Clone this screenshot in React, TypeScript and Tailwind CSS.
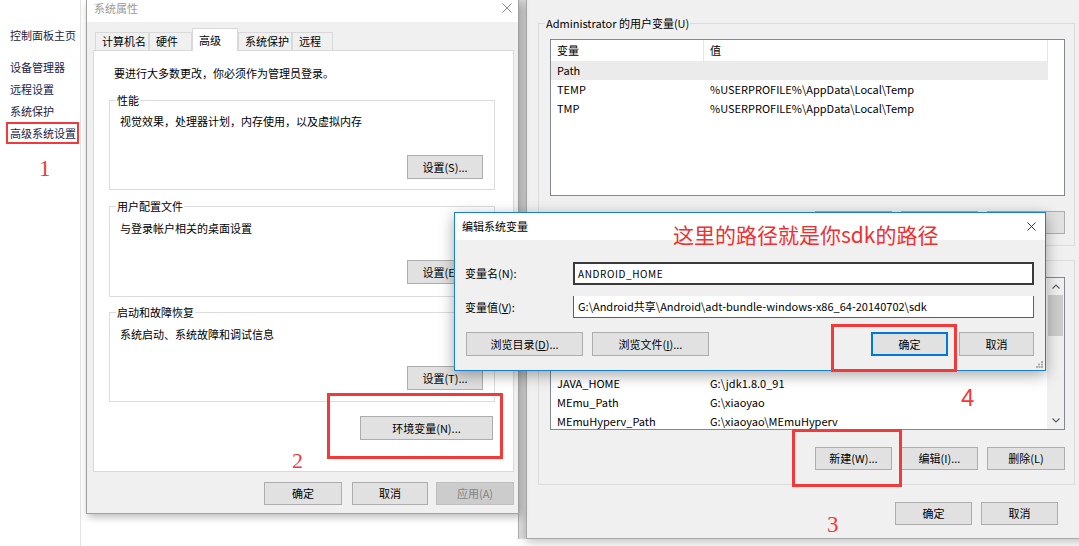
import type { ReactNode } from "react";

const userVars = [
  { name: "Path", value: "", selected: true },
  { name: "TEMP", value: "%USERPROFILE%\\AppData\\Local\\Temp" },
  { name: "TMP", value: "%USERPROFILE%\\AppData\\Local\\Temp" },
];

const sysVars = [
  { name: "ComSpec", value: "C:\\Windows\\system32\\cmd.exe" },
  { name: "ANDROID_HOME", value: "G:\\Android共享\\Android\\adt-bundle" },
  { name: "CLASSPATH", value: ".;%JAVA_HOME%\\lib" },
  { name: "FP_NO_HOST_CHECK", value: "NO" },
  { name: "JAVA_HOME", value: "G:\\jdk1.8.0_91" },
  { name: "MEmu_Path", value: "G:\\xiaoyao" },
  { name: "MEmuHyperv_Path", value: "G:\\xiaoyao\\MEmuHyperv" },
];

function Btn({
  children,
  className = "",
  disabled,
  focused,
}: {
  children: ReactNode;
  className?: string;
  disabled?: boolean;
  focused?: boolean;
}) {
  const look = disabled
    ? "border border-[#bfbfbf] bg-[#cccccc] text-[#838383]"
    : focused
      ? "border-2 border-[#0078d7] bg-[#e1e1e1] text-black"
      : "border border-[#adadad] bg-[#e1e1e1] text-black";
  return (
    <div
      className={`flex shrink-0 items-center justify-center whitespace-nowrap text-[11px] leading-none ${look} ${className}`}
    >
      {children}
    </div>
  );
}

function Close({ className = "" }: { className?: string }) {
  return (
    <svg viewBox="0 0 10 10" className={className} fill="none" stroke="currentColor" strokeWidth="1">
      <path d="M0.5 0.5 9.5 9.5M9.5 0.5 0.5 9.5" />
    </svg>
  );
}

function Group({
  label,
  className = "",
  labelBg = "bg-white",
  children,
}: {
  label: string;
  className?: string;
  labelBg?: string;
  children?: ReactNode;
}) {
  return (
    <div className={`relative flex shrink-0 flex-col border border-[#dcdcdc] ${className}`}>
      <span
        className={`absolute -top-[9px] left-[6px] whitespace-nowrap px-[1px] text-[11px] leading-[16px] ${labelBg}`}
      >
        {label}
      </span>
      {children}
    </div>
  );
}

function Tab({ label, w, active }: { label: string; w: string; active?: boolean }) {
  return (
    <div
      className={`relative z-10 flex shrink-0 items-center whitespace-nowrap border border-b-0 border-[#d9d9d9] pl-[6px] text-[11px] ${w} ${
        active ? "-mb-[1px] h-[23px] bg-white" : "h-[18px] bg-[#f0f0f0]"
      }`}
    >
      {label}
    </div>
  );
}

function VarList({
  rows,
  headerH,
  className = "",
  scroll,
}: {
  rows: { name: string; value: string; selected?: boolean }[];
  headerH: string;
  className?: string;
  scroll?: boolean;
}) {
  return (
    <div
      className={`relative shrink-0 overflow-hidden border border-[#828790] bg-white text-[11px] ${className}`}
    >
      <div className={`flex w-[497px] ${headerH}`}>
        <div className="flex w-[153px] items-center border-r border-[#e5e5e5] pl-[6px]">变量</div>
        <div className="flex flex-1 items-center border-r border-[#e5e5e5] pl-[6px]">值</div>
      </div>
      {rows.map((r) => (
        <div
          key={r.name}
          className={`flex h-[19px] w-[497px] items-center whitespace-nowrap ${r.selected ? "bg-[#ebebeb]" : ""}`}
        >
          <span className="w-[153px] pl-[6px]">{r.name}</span>
          <span className="pl-[6px]">{r.value}</span>
        </div>
      ))}
      {scroll && (
        <div className="absolute bottom-0 right-0 top-0 flex w-[17px] flex-col bg-[#f0f0f0]">
          <div className="flex h-[17px] items-center justify-center">
            <svg viewBox="0 0 8 5" className="h-[5px] w-[8px]" fill="none" stroke="#606060" strokeWidth="1.2">
              <path d="M0.5 4.5 4 1 7.5 4.5" />
            </svg>
          </div>
          <div className="mx-[1px] h-[41px] bg-[#cdcdcd]" />
          <div className="mt-auto flex h-[17px] items-center justify-center">
            <svg viewBox="0 0 8 5" className="h-[5px] w-[8px]" fill="none" stroke="#606060" strokeWidth="1.2">
              <path d="M0.5 0.5 4 4 7.5 0.5" />
            </svg>
          </div>
        </div>
      )}
    </div>
  );
}

export default function App() {
  return (
    <div className="relative h-[546px] w-[1079px] overflow-hidden bg-white font-['Noto_Sans_CJK_SC',sans-serif] text-[11px] text-black">
      {/* control panel sidebar */}
      <div className="absolute left-0 top-0 h-full w-[81px] whitespace-nowrap border-r border-[#e3e3e3] pl-[10px] text-[11px] leading-[16px] text-[#1b1b46]">
        <div className="pt-[27px]">控制面板主页</div>
        <div className="mt-[16px] flex flex-col gap-[6px]">
          <span>设备管理器</span>
          <span>远程设置</span>
          <span>系统保护</span>
          <span>高级系统设置</span>
        </div>
      </div>

      {/* strip between windows */}
      <div className="absolute left-[518px] top-0 h-[539px] w-[9px] border-l border-[#b0b0b0] bg-[#dcdcdc]" />

      {/* environment variables window */}
      <div className="absolute left-[526px] top-0 flex h-[539px] w-[560px] flex-col border-b border-l border-[#a8a8a8] bg-[#f0f0f0] pl-[11px] pr-[11px] pt-[23px] shadow-[0_3px_10px_rgba(0,0,0,0.25)]">
        <Group label="Administrator 的用户变量(U)" labelBg="bg-[#f0f0f0]" className="h-[223px] pl-[11px]">
          <VarList rows={userVars} headerH="h-[21px]" className="mt-[15px] h-[157px] w-[515px]" />
          <div className="mt-[15px] flex justify-end gap-[9px] pr-[9px]">
            <Btn className="h-[23px] w-[77px]">新建(N)...</Btn>
            <Btn className="h-[23px] w-[77px]">编辑(E)...</Btn>
            <Btn className="h-[23px] w-[78px]">删除(D)</Btn>
          </div>
        </Group>
        <Group label="系统变量(S)" labelBg="bg-[#f0f0f0]" className="mt-[14px] h-[225px] pl-[11px]">
          <VarList rows={sysVars} headerH="h-[20px]" className="mt-[16px] h-[153px] w-[515px]" scroll />
          <div className="mt-[17px] flex justify-end gap-[9px] pr-[9px]">
            <Btn className="h-[23px] w-[77px]">新建(W)...</Btn>
            <Btn className="h-[23px] w-[77px]">编辑(I)...</Btn>
            <Btn className="h-[23px] w-[78px]">删除(L)</Btn>
          </div>
        </Group>
        <div className="mt-[17px] flex justify-end gap-[9px] pr-[17px]">
          <Btn className="h-[23px] w-[77px]">确定</Btn>
          <Btn className="h-[23px] w-[77px]">取消</Btn>
        </div>
      </div>

      {/* system properties dialog */}
      <div className="absolute left-[86px] top-0 flex h-[514px] w-[433px] flex-col border border-t-0 border-[#a0a0a0] bg-[#f0f0f0] shadow-[2px_3px_8px_rgba(0,0,0,0.28)]">
        <div className="flex h-[22px] items-start justify-between bg-white pl-[7px] pr-[6px] pt-[1px]">
          <span className="leading-[14px] text-[#9a9a9a]">系统属性</span>
          <Close className="mt-[2px] h-[10px] w-[10px] text-[#8a8a8a]" />
        </div>
        <div className="flex flex-1 flex-col pl-[6px] pr-[4px] pt-[6px]">
          <div className="flex h-[22px] items-end pl-[2px]">
            <Tab label="计算机名" w="w-[54px]" />
            <Tab label="硬件" w="w-[43px]" />
            <Tab label="高级" w="w-[46px]" active />
            <Tab label="系统保护" w="w-[54px]" />
            <Tab label="远程" w="w-[41px]" />
          </div>
          <div className="flex h-[422px] w-[421px] flex-col whitespace-nowrap border border-[#d9d9d9] bg-white pl-[15px] pr-[18px] leading-[16px]">
            <p className="ml-[5px] mt-[14px]">要进行大多数更改，你必须作为管理员登录。</p>
            <Group label="性能" className="mt-[19px] h-[90px] pl-[10px] pt-[12px]">
              <p>视觉效果，处理器计划，内存使用，以及虚拟内存</p>
              <Btn className="mb-[10px] mr-[11px] mt-auto h-[24px] w-[76px] self-end">设置(S)...</Btn>
            </Group>
            <Group label="用户配置文件" className="mt-[16px] h-[91px] pl-[10px] pt-[13px]">
              <p>与登录帐户相关的桌面设置</p>
              <Btn className="mb-[12px] mr-[11px] mt-auto h-[24px] w-[76px] self-end">设置(E)...</Btn>
            </Group>
            <Group label="启动和故障恢复" className="mt-[15px] h-[90px] pl-[10px] pt-[13px]">
              <p>系统启动、系统故障和调试信息</p>
              <Btn className="mb-[11px] mr-[11px] mt-auto h-[24px] w-[76px] self-end">设置(T)...</Btn>
            </Group>
            <Btn className="mr-[2px] mt-[14px] h-[24px] w-[133px] self-end">环境变量(N)...</Btn>
          </div>
          <div className="mt-[10px] flex justify-end">
            <Btn className="h-[23px] w-[78px]">确定</Btn>
            <Btn className="ml-[10px] h-[23px] w-[76px]">取消</Btn>
            <Btn className="ml-[8px] h-[23px] w-[78px]" disabled>
              应用(A)
            </Btn>
          </div>
        </div>
      </div>

      {/* edit system variable dialog */}
      <div className="absolute left-[454px] top-[212px] flex h-[159px] w-[592px] flex-col whitespace-nowrap border border-[#1a7fd4] bg-[#f0f0f0] shadow-[0_4px_14px_rgba(0,0,0,0.35)]">
        <div className="flex h-[27px] items-center justify-between bg-white pl-[7px] pr-[9px]">
          <span>编辑系统变量</span>
          <Close className="h-[9px] w-[9px] text-[#222]" />
        </div>
        <div className="mt-[22px] flex h-[23px] items-center">
          <span className="w-[118px] pl-[10px]">变量名(N):</span>
          <div className="flex h-[23px] w-[461px] items-center border-2 border-[#3a3a3a] bg-white pl-[3px] text-[10px] tracking-[0.6px]">
            ANDROID_HOME
          </div>
        </div>
        <div className="mt-[11px] flex h-[22px] items-center">
          <span className="w-[118px] pl-[10px]">
            变量值(<u>V</u>):
          </span>
          <div className="flex h-[22px] w-[461px] items-center border-x border-b border-[#0078d7] bg-white pl-[4px]">
            G:\Android共享\Android\adt-bundle-windows-x86_64-20140702\sdk
          </div>
        </div>
        <div className="mt-[14px] flex h-[24px] pr-[11px]">
          <Btn className="ml-[11px] h-[24px] w-[117px]">
            浏览目录(<u>D</u>)...
          </Btn>
          <Btn className="ml-[9px] h-[24px] w-[117px]">
            浏览文件(<u>I</u>)...
          </Btn>
          <Btn className="ml-auto h-[24px] w-[77px]" focused>
            确定
          </Btn>
          <Btn className="ml-[11px] h-[24px] w-[75px]">取消</Btn>
        </div>
        <svg viewBox="0 0 7 7" className="absolute bottom-[2px] right-[2px] h-[7px] w-[7px]" fill="#b0b0b0">
          <rect x="5" y="0" width="2" height="2" />
          <rect x="2" y="2.5" width="2" height="2" />
          <rect x="5" y="2.5" width="2" height="2" />
          <rect x="0" y="5" width="2" height="2" />
          <rect x="2.5" y="5" width="2" height="2" />
          <rect x="5" y="5" width="2" height="2" />
        </svg>
      </div>

      {/* annotations */}
      <div className="absolute left-[6px] top-[122px] h-[22px] w-[73px] border-2 border-[#f23a3a]" />
      <span className="absolute left-[39px] top-[155px] font-['Liberation_Serif',serif] text-[23px] leading-[28px] text-[#f23a3a]">
        1
      </span>
      <div className="absolute left-[327px] top-[393px] h-[66px] w-[176px] border-[3px] border-[#f23a3a]" />
      <span className="absolute left-[292px] top-[448px] font-['Liberation_Serif',serif] text-[22px] leading-[26px] text-[#f23a3a]">
        2
      </span>
      <div className="absolute left-[792px] top-[429px] h-[58px] w-[110px] border-[3px] border-[#f23a3a]" />
      <span className="absolute left-[827px] top-[511px] font-['Liberation_Serif',serif] text-[23px] leading-[28px] text-[#f23a3a]">
        3
      </span>
      <div className="absolute left-[831px] top-[324px] h-[48px] w-[126px] border-[3px] border-[#f23a3a]" />
      <span className="absolute left-[961px] top-[384px] font-['Liberation_Sans',sans-serif] text-[24px] leading-[28px] text-[#f23a3a]">
        4
      </span>
      <span className="absolute left-[673px] top-[220px] whitespace-nowrap text-[21px] leading-[28px] text-[#f03030]">
        这里的路径就是你sdk的路径
      </span>
    </div>
  );
}
